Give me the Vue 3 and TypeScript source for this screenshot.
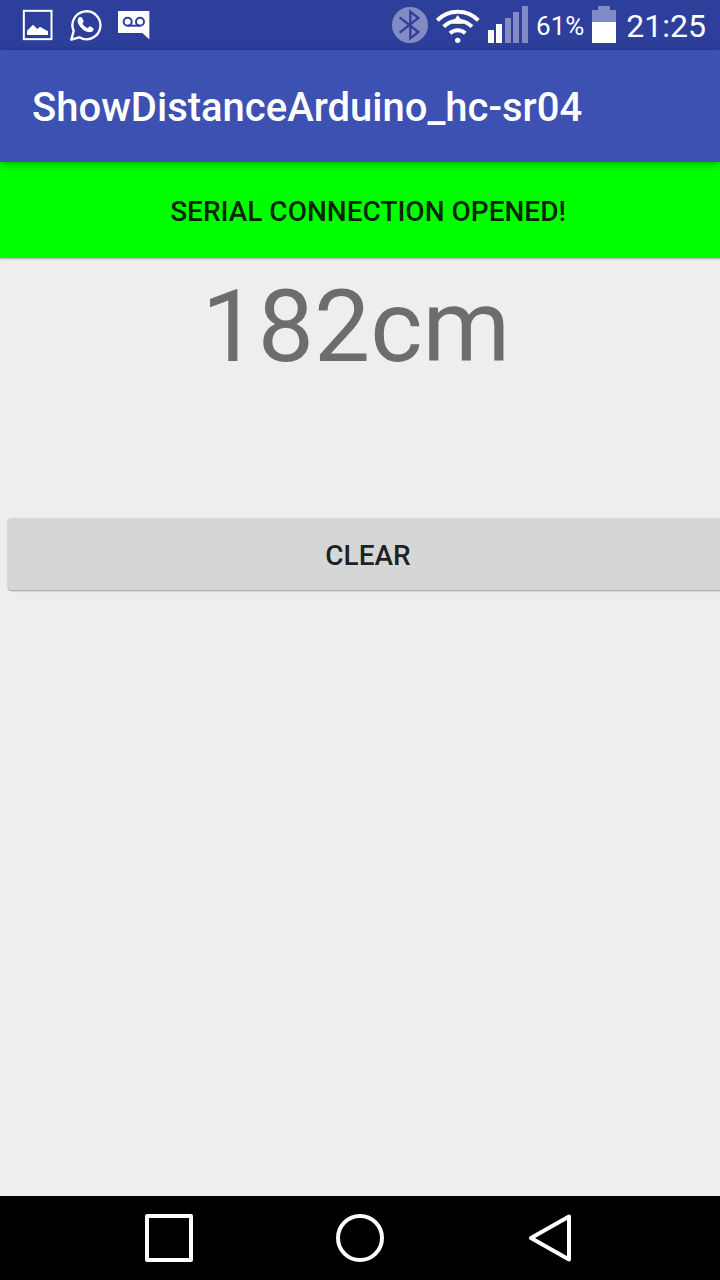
<script setup lang="ts">
import { ref } from 'vue'

const title = 'ShowDistanceArduino_hc-sr04'
const status = ref('Serial connection opened!')
const distance = ref('182cm')

function clearReading(): void {
  distance.value = ''
}
</script>

<template>
  <div class="screen">
    <div class="status-bar">
      <div class="notices">
        <svg class="notice" viewBox="0 0 144 150" aria-hidden="true">
          <rect x="29.5" y="32.5" width="83" height="85" fill="none" stroke="#fff" stroke-width="6" />
          <path d="M39 105V92L57 74L70 87L78 80L102 94V105Z" fill="#fff" />
        </svg>
        <svg class="notice" viewBox="186 0 144 150" aria-hidden="true">
          <path d="M214 119L221 93A42 42 0 1 1 238 112Z" fill="none" stroke="#fff" stroke-width="7" stroke-linejoin="round" />
          <path d="M237 52Q241 50 245 52L251 63Q251 67 247 71Q252 80 263 85L269 79Q273 79 281 86Q282 91 276 95Q266 99 253 92Q240 84 234 70Q231 58 237 52Z" fill="#fff" />
        </svg>
        <svg class="notice" viewBox="282 0 144 150" aria-hidden="true">
          <path d="M306 33H400V118L379 99H306Z" fill="#fff" />
          <g fill="none" stroke="#2d3f9b" stroke-width="6">
            <circle cx="335" cy="65" r="12" />
            <circle cx="372" cy="65" r="12" />
            <path d="M335 77H372" />
          </g>
        </svg>
      </div>
      <div class="system">
        <svg class="bluetooth" viewBox="33 18 108 111" aria-hidden="true">
          <circle cx="87" cy="75" r="54" fill="#838bc5" />
          <path d="M56 52L112 96L88 115V35L112 54L56 98" fill="none" stroke="#2d3f9b" stroke-width="7" />
        </svg>
        <svg class="wifi" viewBox="171 18 132 111" aria-hidden="true">
          <g fill="none" stroke="#fff" stroke-width="12">
            <path d="M175 61A86 86 0 0 1 298 61" />
            <path d="M194 80A59 59 0 0 1 279 80" />
            <path d="M213 100A34 34 0 0 1 259 100" />
          </g>
          <path d="M236 45L256 73H217Z" fill="#fff" />
          <path d="M217 73H256" stroke="#2a3155" stroke-width="3" />
          <circle cx="236" cy="121" r="8" fill="#fff" />
        </svg>
        <svg class="signal" viewBox="327 18 120 111" aria-hidden="true">
          <path d="M327 90H345V129H327ZM351 72H369V129H351Z" fill="#fff" />
          <path d="M378 54H396V129H378ZM402 36H420V129H402ZM429 18H447V129H429Z" fill="#838bc5" />
        </svg>
        <span class="percent">61%</span>
        <svg class="battery" viewBox="0 0 24 37" aria-hidden="true">
          <path d="M6 0H18V4H24V16H0V4H6Z" fill="#838bc5" />
          <path d="M0 16H24V37H0Z" fill="#fff" />
        </svg>
        <span class="clock">21:25</span>
      </div>
    </div>

    <header class="app-bar">
      <h1>{{ title }}</h1>
    </header>

    <main class="content">
      <button class="connection" type="button">{{ status }}</button>
      <p class="reading">{{ distance }}</p>
      <button class="clear" type="button" @click="clearReading">Clear</button>
    </main>

    <nav class="nav-bar">
      <button type="button" aria-label="Recent apps">
        <svg viewBox="0 0 48 48"><rect x="2" y="2" width="44" height="44" /></svg>
      </button>
      <button type="button" aria-label="Home">
        <svg viewBox="0 0 48 48"><circle cx="24" cy="24" r="22" /></svg>
      </button>
      <button type="button" aria-label="Back">
        <svg viewBox="0 0 48 48"><path d="M4 24L42 2.500V45.500Z" /></svg>
      </button>
    </nav>
  </div>
</template>

<style>
body {
  margin: 0;
}
</style>

<style scoped>
.screen {
  display: flex;
  flex-direction: column;
  min-height: 100vh;
  overflow: hidden;
  background: #eeeeee;
  font-family: Roboto, "Liberation Sans", sans-serif;
}

button {
  border: 0;
  padding: 0;
  font-family: inherit;
}

svg {
  display: block;
  flex: none;
}

.status-bar {
  display: flex;
  justify-content: space-between;
  align-items: center;
  height: 50px;
  padding: 0 14px;
  background: #2d3f9b;
  color: #fff;
}

.notices,
.system {
  display: flex;
  align-items: center;
}

.notice {
  width: 48px;
  height: 50px;
}

.system {
  gap: 8px;
}

.system svg {
  height: 37px;
  margin-bottom: 1px;
}

.bluetooth {
  width: 36px;
}

.wifi {
  width: 44px;
}

.signal {
  width: 40px;
}

.battery {
  width: 24px;
}

.percent,
.clock {
  padding-top: 2px;
  line-height: 36px;
}

.percent {
  font-size: 26px;
}

.clock {
  margin-left: 2px;
  font-size: 32px;
}

.app-bar {
  position: relative;
  z-index: 1;
  display: flex;
  align-items: center;
  box-sizing: border-box;
  height: 112px;
  padding: 4px 32px 0;
  background: #3d51b3;
  box-shadow: 0 2px 8px rgba(0, 0, 0, 0.3);
}

h1 {
  margin: 0;
  color: #fff;
  font-size: 40px;
  font-weight: 500;
  line-height: 48px;
}

.content {
  flex: 1;
  display: flex;
  flex-direction: column;
  width: calc(100% + 16px);
}

.connection,
.clear {
  padding-top: 2px;
  color: rgba(0, 0, 0, 0.87);
  font-size: 28px;
  font-weight: 500;
  text-transform: uppercase;
}

.connection {
  height: 96px;
  background: #00ff00;
  box-shadow: 0 1px 2px rgba(0, 0, 0, 0.3);
}

.reading {
  min-height: 138px;
  margin: 0 24px 122px 0;
  color: #6d6d6d;
  font-size: 100px;
  line-height: 138px;
  text-align: center;
}

.clear {
  height: 72px;
  margin: 0 8px;
  border-radius: 4px;
  background: #d5d7d6;
  box-shadow: 0 1px 2px rgba(0, 0, 0, 0.35);
}

.nav-bar {
  display: flex;
  justify-content: center;
  gap: 143px;
  height: 84px;
  background: #000;
}

.nav-bar button {
  width: 48px;
  background: none;
}

.nav-bar svg {
  width: 48px;
  height: 48px;
  fill: none;
  stroke: #fff;
  stroke-width: 4;
  stroke-linejoin: round;
}
</style>
